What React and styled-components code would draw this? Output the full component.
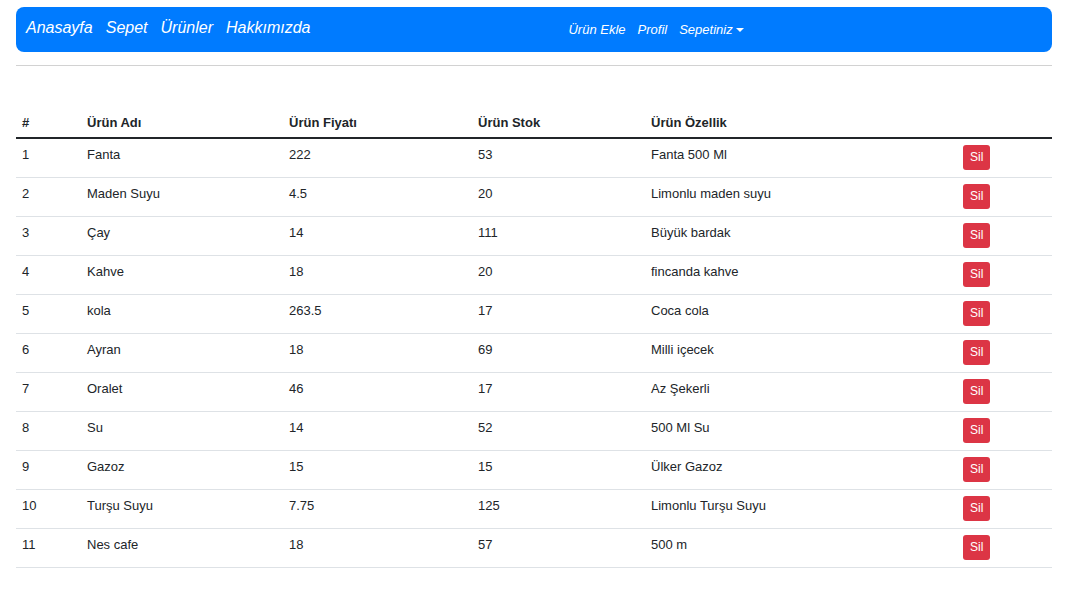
import React from "react";
import styled, { createGlobalStyle } from "styled-components";

const Global = createGlobalStyle`
  *, *::before, *::after { box-sizing: border-box; }
  html, body { margin: 0; padding: 0; background: #fff; }
  body { font-family: "Liberation Sans", Arial, sans-serif; color: #212529; }
`;

const Page = styled.div`
  padding: 7px 15px 0 16px;
`;

const Navbar = styled.nav`
  height: 45px;
  background: #007bff;
  border-radius: 8px;
  display: flex;
  align-items: center;
  padding-left: 10px;
`;

const NavGroup = styled.div`
  display: flex;
  align-items: center;
  gap: ${(p) => p.$gap}px;
  margin-left: ${(p) => p.$ml || 0}px;
  padding-bottom: ${(p) => p.$pb || 0}px;
`;

const NavLink = styled.a`
  color: #fff;
  font-style: italic;
  font-size: ${(p) => p.$size}px;
  text-decoration: none;
  white-space: nowrap;
  display: inline-flex;
  align-items: center;
`;

const Caret = styled.span`
  display: inline-block;
  margin-left: 3px;
  margin-top: 1px;
  width: 0;
  height: 0;
  border-top: 4px solid #fff;
  border-left: 4px solid transparent;
  border-right: 4px solid transparent;
`;

const Rule = styled.hr`
  margin: 13px 0 40px;
  border: 0;
  border-top: 1px solid #d2d2d2;
`;

const Table = styled.table`
  width: 100%;
  border-collapse: collapse;
  table-layout: fixed;
  font-size: 13px;
  line-height: 21px;
`;

const Th = styled.th`
  width: ${(p) => p.$w}px;
  text-align: left;
  font-weight: bold;
  padding: 6px 6px 4px;
  border-bottom: 2px solid #212529;
  vertical-align: bottom;
`;

const Td = styled.td`
  padding: 5px 6px 8px;
  vertical-align: top;
  border-bottom: 1px solid #dee2e6;
`;

const ActionTd = styled(Td)`
  padding-top: 6px;
  padding-bottom: 7px;
`;

const Row = styled.tr``;

const DelButton = styled.button`
  display: block;
  font-family: "Liberation Sans", Arial, sans-serif;
  font-size: 12px;
  line-height: 25px;
  height: 25px;
  padding: 0 7px;
  color: #fff;
  background: #dc3545;
  border: 0;
  border-radius: 3px;
  cursor: pointer;
`;

const rows = [
  [1, "Fanta", "222", "53", "Fanta 500 Ml"],
  [2, "Maden Suyu", "4.5", "20", "Limonlu maden suyu"],
  [3, "Çay", "14", "111", "Büyük bardak"],
  [4, "Kahve", "18", "20", "fincanda kahve"],
  [5, "kola", "263.5", "17", "Coca cola"],
  [6, "Ayran", "18", "69", "Milli içecek"],
  [7, "Oralet", "46", "17", "Az Şekerli"],
  [8, "Su", "14", "52", "500 Ml Su"],
  [9, "Gazoz", "15", "15", "Ülker Gazoz"],
  [10, "Turşu Suyu", "7.75", "125", "Limonlu Turşu Suyu"],
  [11, "Nes cafe", "18", "57", "500 m"],
];

export default function App() {
  return (
    <>
      <Global />
      <Page>
        <Navbar>
          <NavGroup $gap={13} $pb={3}>
            <NavLink $size={16} href="#">Anasayfa</NavLink>
            <NavLink $size={16} href="#">Sepet</NavLink>
            <NavLink $size={16} href="#">Ürünler</NavLink>
            <NavLink $size={16} href="#">Hakkımızda</NavLink>
          </NavGroup>
          <NavGroup $gap={12} $ml={258}>
            <NavLink $size={13} href="#">Ürün Ekle</NavLink>
            <NavLink $size={13} href="#">Profil</NavLink>
            <NavLink $size={13} href="#">
              Sepetiniz
              <Caret />
            </NavLink>
          </NavGroup>
        </Navbar>
        <Rule />
        <Table>
          <thead>
            <Row>
              <Th $w={65}>#</Th>
              <Th $w={202}>Ürün Adı</Th>
              <Th $w={189}>Ürün Fiyatı</Th>
              <Th $w={173}>Ürün Stok</Th>
              <Th $w={312}>Ürün Özellik</Th>
              <Th $w={95}></Th>
            </Row>
          </thead>
          <tbody>
            {rows.map((r) => (
              <Row key={r[0]}>
                <Td>{r[0]}</Td>
                <Td>{r[1]}</Td>
                <Td>{r[2]}</Td>
                <Td>{r[3]}</Td>
                <Td>{r[4]}</Td>
                <ActionTd>
                  <DelButton>Sil</DelButton>
                </ActionTd>
              </Row>
            ))}
          </tbody>
        </Table>
      </Page>
    </>
  );
}
